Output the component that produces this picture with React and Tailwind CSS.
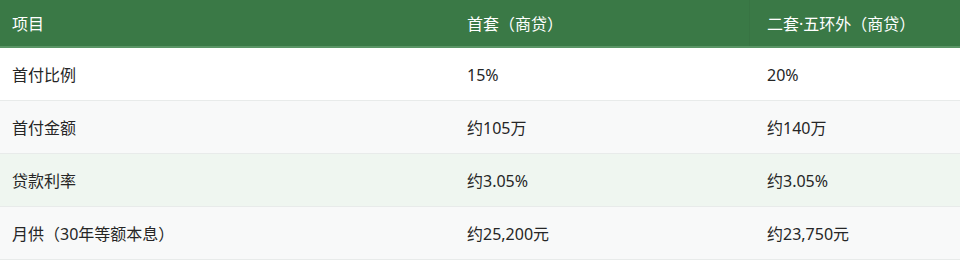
export default function App() {
  const rows = [
    { k: "首付比例", a: "15%", b: "20%", bg: "bg-white" },
    { k: "首付金额", a: "约105万", b: "约140万", bg: "bg-[#f8f9f9]" },
    { k: "贷款利率", a: "约3.05%", b: "约3.05%", bg: "bg-[#eff6f0]" },
    { k: "月供（30年等额本息）", a: "约25,200元", b: "约23,750元", bg: "bg-[#f8f9f9]" },
  ];
  return (
    <div
      className="w-[960px] bg-white text-[16px] text-[#262626]"
      style={{ fontFamily: '"Noto Sans", "Noto Sans CJK SC", sans-serif' }}
    >
      <div className="grid grid-cols-[455px_295px_1fr] h-[48px] bg-[#3a7946] border-b-2 border-[#5a9565] text-white">
        <div className="flex items-center pl-3 pt-[2px]">项目</div>
        <div className="flex items-center pl-3 pt-[2px] border-r border-[#387443]">首套（商贷）</div>
        <div className="flex items-center pl-[17px] pt-[2px]">二套·五环外（商贷）</div>
      </div>
      {rows.map((r) => (
        <div
          key={r.k}
          className={`grid grid-cols-[455px_295px_1fr] h-[53px] border-b border-[#e8ebea] ${r.bg}`}
        >
          <div className="flex items-center pl-3 pt-[1px]">{r.k}</div>
          <div className="flex items-center pl-3 pt-[1px]">{r.a}</div>
          <div className="flex items-center pl-[17px] pt-[1px]">{r.b}</div>
        </div>
      ))}
    </div>
  );
}
